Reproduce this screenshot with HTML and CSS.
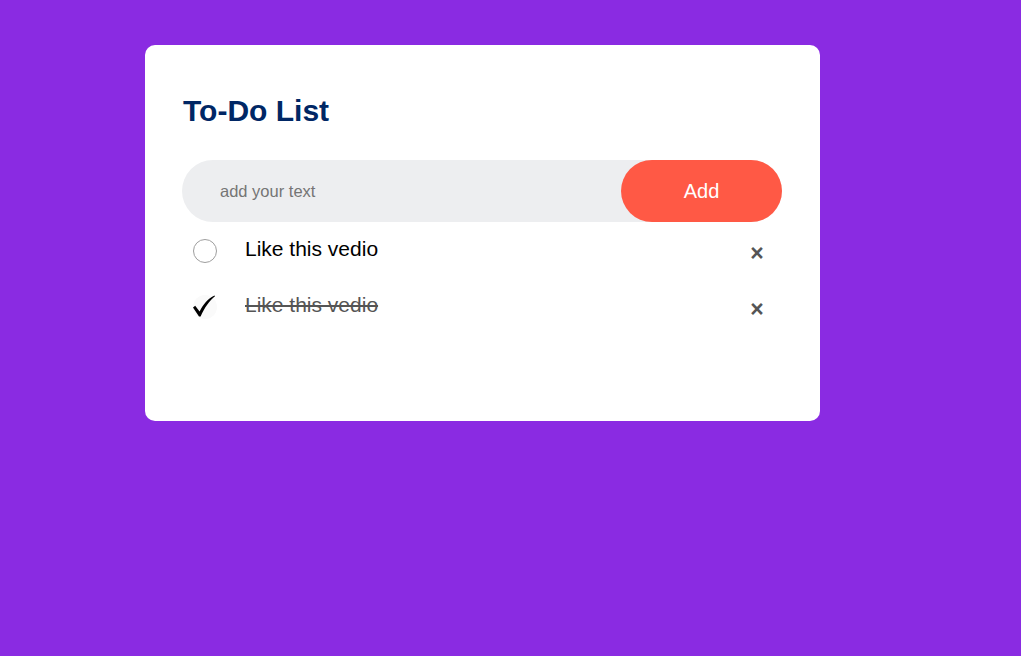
FILE: index.html
```html
<!DOCTYPE html>
<html lang="en">
<head>
<meta charset="utf-8">
<title>To-Do List</title>
<link rel="stylesheet" href="styles.css">
</head>
<body>
<div class="todo-app">
  <h2 class="title">To-Do List</h2>
  <div class="row">
    <input class="field" type="text" placeholder="add your text">
    <button class="add-btn">Add</button>
  </div>
  <ul class="list">
    <li class="item">
      <span class="box"></span>
      <span class="label">Like this vedio</span>
      <span class="remove">&times;</span>
    </li>
    <li class="item done">
      <span class="box checked">
        <svg width="26" height="24" viewBox="0 0 26 24"><path d="M2 13.5 L4.2 11.8 L8.6 17.5 C12 10.5 17 4.5 23.5 1.5 L24 2.2 C18.5 6.5 13.5 13.5 9.6 22.5 L8 22.5 Z" fill="#000"/></svg>
      </span>
      <span class="label">Like this vedio</span>
      <span class="remove">&times;</span>
    </li>
  </ul>
</div>
</body>
</html>
```

FILE: styles.css
```css
* { box-sizing: border-box; }
html, body {
  margin: 0;
  padding: 0;
}
body {
  background: #8a2be2;
  min-height: 656px;
  font-family: "Liberation Sans", Arial, sans-serif;
  padding: 45px 0 0 145px;
}
.todo-app {
  width: 675px;
  background: #fff;
  border-radius: 10px;
  padding: 49px 38px 87px 37px;
}
.title {
  margin: 0 0 32px 1px;
  font-size: 30px;
  line-height: 34px;
  font-weight: bold;
  color: #002765;
}
.row {
  display: flex;
  align-items: center;
  height: 62px;
  background: #edeef0;
  border-radius: 31px;
}
.field {
  flex: 1;
  border: none;
  outline: none;
  background: transparent;
  padding: 0 0 0 38px;
  font-family: "Liberation Sans", Arial, sans-serif;
  font-size: 16.5px;
  color: #333;
  height: 62px;
}
.field::placeholder { color: #757575; }
.add-btn {
  width: 161px;
  height: 62px;
  border: none;
  border-radius: 31px;
  background: #ff5945;
  color: #fff;
  font-family: "Liberation Sans", Arial, sans-serif;
  font-size: 20px;
  padding: 0;
}
.list {
  list-style: none;
  margin: 0;
  padding: 0;
}
.item {
  display: flex;
  align-items: center;
  height: 56px;
  padding-left: 11px;
}
.box {
  width: 24px;
  height: 24px;
  border-radius: 50%;
  border: 1px solid #9e9e9e;
  flex: none;
  margin-top: 1px;
  display: flex;
  align-items: center;
  justify-content: center;
}
.box.checked {
  border: none;
  background: #fafafa;
}
.box.checked svg { margin-left: -2px; margin-top: -1px; }
.label {
  flex: 1;
  margin-left: 28px;
  font-size: 21px;
  color: #000;
  margin-top: -3px;
}
.done .label {
  color: #555;
  text-decoration: line-through;
}
.remove {
  width: 40px;
  height: 40px;
  line-height: 40px;
  text-align: center;
  font-size: 23px;
  font-weight: bold;
  color: #555;
  margin-right: 5px;
  margin-top: 6px;
}
```
